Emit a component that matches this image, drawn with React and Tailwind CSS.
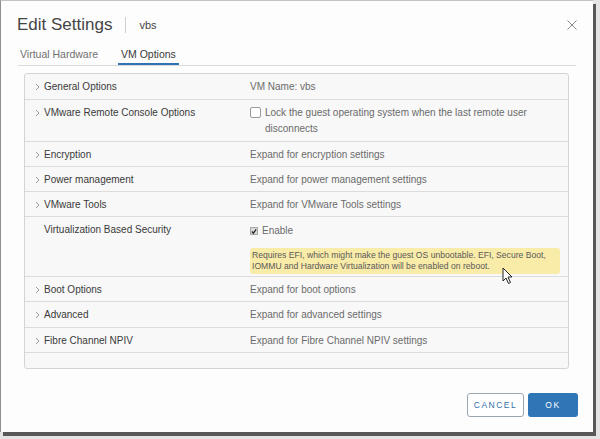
import React from "react";

const Chevron = () => (
  <svg width="5" height="8" viewBox="0 0 5 8" className="shrink-0">
    <polyline points="1,1 4,4 1,7" fill="none" stroke="#9a9a9a" strokeWidth="1" />
  </svg>
);

const Row = ({ label, chevron = true, h, children }) => (
  <div className={`flex border-b border-[#dcdcdc] pt-[5px] leading-[16px] ${h}`}>
    <div className="w-[225px] pl-[10px] flex items-center gap-[4px] h-[16px] shrink-0">
      {chevron ? <Chevron /> : <span className="w-[5px]" />}
      <span className="text-[#3a3a3a]">{label}</span>
    </div>
    <div className="flex-1 text-[#6b6b6b]">{children}</div>
  </div>
);

export default function App() {
  return (
    <div
      className="w-[600px] h-[439px] bg-[#e4e4e4] overflow-hidden relative"
      style={{ fontFamily: '"Liberation Sans", Arial, sans-serif' }}
    >
      <div className="w-[593px] h-[432px] bg-[#fdfdfd] border-l border-t border-l-[#8f8f8f] border-t-[#c4c4c4] shadow-[3px_4px_0_0_#585858] flex flex-col">
        {/* header */}
        <div className="flex items-center justify-between pt-[15px] pl-[16px] pr-[16px]">
          <div className="flex items-center h-[18px]">
            <span className="text-[17px] leading-[18px] text-[#444]">Edit Settings</span>
            <span className="w-px h-[16px] bg-[#cfcfcf] mx-[13px]" />
            <span className="text-[11px] text-[#444]">vbs</span>
          </div>
          <svg width="10" height="10" viewBox="0 0 10 10">
            <path d="M0.5 0.5 L9.5 9.5 M9.5 0.5 L0.5 9.5" stroke="#8a8a8a" strokeWidth="1" />
          </svg>
        </div>

        {/* tabs */}
        <div className="flex items-end mt-[13px] mx-[17px] border-b border-[#dadada] text-[10.5px] leading-[14px]">
          <div className="ml-[2px] pb-[4px] text-[#707070]">Virtual Hardware</div>
          <div className="ml-[20px] px-[3px] pb-[2px] border-b-2 border-[#2f73b3] text-[#3a3a3a]">VM Options</div>
        </div>

        {/* panel */}
        <div className="mt-[7px] ml-[23px] w-[545px] border border-[#d4d4d4] rounded-[3px] bg-[#f8f8f8] text-[10px]">
          <Row label="General Options" h="h-[26px]">VM Name: vbs</Row>
          <Row label="VMware Remote Console Options" h="h-[42px]">
            <div className="flex items-start">
              <span className="mt-[2px] w-[11px] h-[11px] border border-[#9a9a9a] rounded-[2px] bg-white shrink-0" />
              <span className="ml-[4px] w-[275px]">
                Lock the guest operating system when the last remote user disconnects
              </span>
            </div>
          </Row>
          <Row label="Encryption" h="h-[25px]">Expand for encryption settings</Row>
          <Row label="Power management" h="h-[25px]">Expand for power management settings</Row>
          <Row label="VMware Tools" h="h-[25px]">Expand for VMware Tools settings</Row>
          <Row label="Virtualization Based Security" chevron={false} h="h-[60px]">
            <div className="flex items-center mt-[1px]">
              <span className="w-[8px] h-[8px] bg-[#d9d9d9] border border-[#a8a8a8] flex items-center justify-center">
                <svg width="7" height="7" viewBox="0 0 7 7">
                  <polyline points="1,3.5 2.8,5.5 6,1" fill="none" stroke="#222" strokeWidth="1.4" />
                </svg>
              </span>
              <span className="ml-[4px]">Enable</span>
            </div>
            <div className="mt-[9px] w-[310px] h-[26px] bg-[#f9eba8] rounded-[3px] px-[2px] pt-[2px] text-[8.6px] leading-[10.5px] text-[#5a5a5a]">
              Requires EFI, which might make the guest OS unbootable. EFI, Secure Boot,
              <br />
              IOMMU and Hardware Virtualization will be enabled on reboot.
            </div>
          </Row>
          <Row label="Boot Options" h="h-[25px]">Expand for boot options</Row>
          <Row label="Advanced" h="h-[26px]">Expand for advanced settings</Row>
          <Row label="Fibre Channel NPIV" h="h-[25px]">Expand for Fibre Channel NPIV settings</Row>
          <div className="h-[15px]" />
        </div>

        {/* buttons */}
        <div className="flex justify-end gap-[4px] mt-[24px] mr-[15px]">
          <button className="w-[57px] h-[24px] border border-[#9aa7b3] rounded-[3px] bg-white text-[8.5px] tracking-[1.5px] text-[#2f6fa8]">
            CANCEL
          </button>
          <button className="w-[50px] h-[24px] rounded-[3px] bg-[#2f76b7] text-[8.5px] tracking-[1.5px] text-white">
            OK
          </button>
        </div>
      </div>

      {/* mouse cursor */}
      <svg className="absolute left-[502px] top-[267px]" width="12" height="18" viewBox="0 0 12 18">
        <path d="M1 1 L1 14 L4 11 L6.5 16.5 L8.5 15.5 L6 10 L10 10 Z" fill="#fff" stroke="#222" strokeWidth="1" strokeLinejoin="round" />
      </svg>
    </div>
  );
}
